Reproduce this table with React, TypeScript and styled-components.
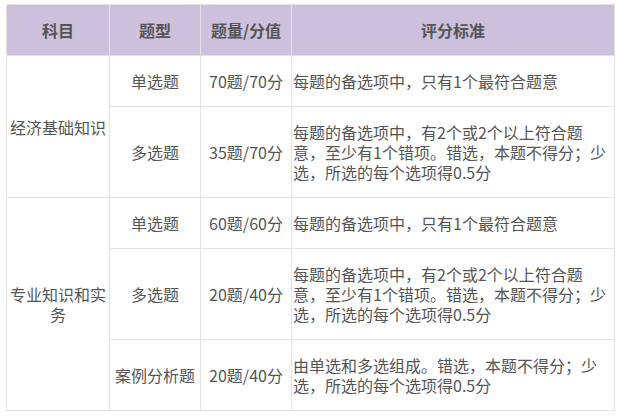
import React from "react";
import styled, { createGlobalStyle } from "styled-components";

const Global = createGlobalStyle`
  html, body { margin: 0; padding: 0; background: #ffffff; }
  body { font-family: "Noto Sans CJK SC", "Noto Sans", sans-serif; }
`;

const Page = styled.div`
  padding: 4px 0 0 6px;
`;

const Table = styled.table`
  border-collapse: collapse;
  table-layout: fixed;
  width: 608px;
  font-size: 16px;
  line-height: 20px;
  color: #555555;
`;

const Th = styled.th`
  background: #cdc0dc;
  border: 1px solid #e3e3e3;
  padding: 15px 0;
  font-weight: bold;
  text-align: center;
  color: #555555;
`;

const Td = styled.td<{ $left?: boolean }>`
  border: 1px solid #e3e3e3;
  padding: ${(p) => (p.$left ? "15px 6px 15px 1px" : "15px 0")};
  text-align: ${(p) => (p.$left ? "left" : "center")};
  vertical-align: middle;
  background: #ffffff;
`;

type Row = { type: string; score: string; rule: string };
type Group = { subject: string; rows: Row[] };

const multi =
  "每题的备选项中，有2个或2个以上符合题意，至少有1个错项。错选，本题不得分；少选，所选的每个选项得0.5分";
const single = "每题的备选项中，只有1个最符合题意";

const groups: Group[] = [
  {
    subject: "经济基础知识",
    rows: [
      { type: "单选题", score: "70题/70分", rule: single },
      { type: "多选题", score: "35题/70分", rule: multi },
    ],
  },
  {
    subject: "专业知识和实务",
    rows: [
      { type: "单选题", score: "60题/60分", rule: single },
      { type: "多选题", score: "20题/40分", rule: multi },
      {
        type: "案例分析题",
        score: "20题/40分",
        rule: "由单选和多选组成。错选，本题不得分；少选，所选的每个选项得0.5分",
      },
    ],
  },
];

export default function App() {
  return (
    <Page>
      <Global />
      <Table>
        <colgroup>
          <col style={{ width: 103 }} />
          <col style={{ width: 91 }} />
          <col style={{ width: 91 }} />
          <col style={{ width: 323 }} />
        </colgroup>
        <thead>
          <tr>
            <Th>科目</Th>
            <Th>题型</Th>
            <Th>题量/分值</Th>
            <Th>评分标准</Th>
          </tr>
        </thead>
        <tbody>
          {groups.map((g) =>
            g.rows.map((r, i) => (
              <tr key={g.subject + i}>
                {i === 0 && <Td rowSpan={g.rows.length}>{g.subject}</Td>}
                <Td>{r.type}</Td>
                <Td>{r.score}</Td>
                <Td $left>{r.rule}</Td>
              </tr>
            ))
          )}
        </tbody>
      </Table>
    </Page>
  );
}
